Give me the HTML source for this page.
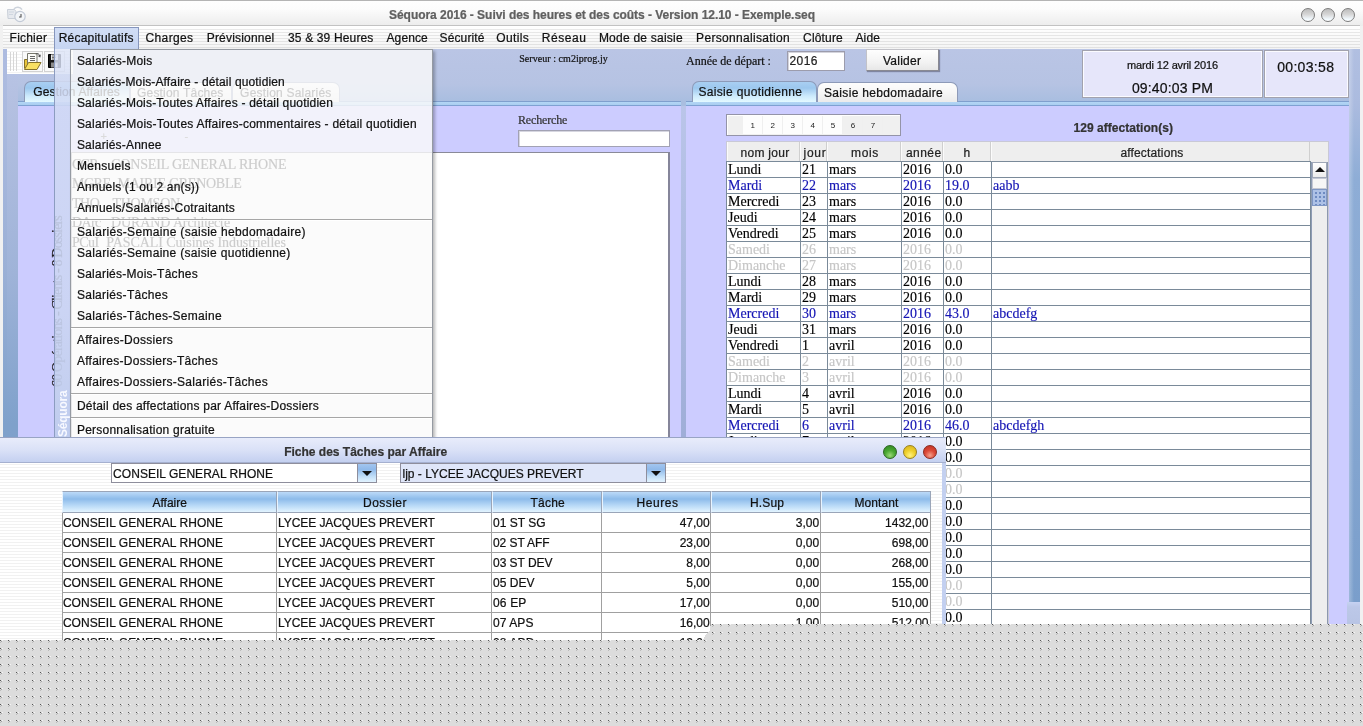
<!DOCTYPE html><html lang="fr"><head><meta charset="utf-8"><title>Séquora 2016</title><style>

*{box-sizing:border-box;margin:0;padding:0}
html,body{width:1363px;height:726px;overflow:hidden;background:#f1f1f1}
body{position:relative;font-family:"Liberation Sans",sans-serif;font-size:12px;color:#111}
#root{position:absolute;left:0;top:0;width:1363px;height:726px;will-change:transform}
.abs{position:absolute}
.t{position:absolute;white-space:nowrap;-webkit-text-stroke:0.22px currentColor}
#titlebar{left:0;top:0;width:1363px;height:26px;background:linear-gradient(#fefefe 0,#fcfcfc 8px,#ececec 25px);border-top:1px solid #b4b4b4}
.wc{position:absolute;top:8px;width:14px;height:14px;border-radius:50%;border:1.3px solid #7c7c7c;background:linear-gradient(#bcbcbc 0,#d6d6d6 45%,#f2faff 85%,#fff 100%)}
#menubar{left:3px;top:25px;width:1357px;height:24px;border-top:1px solid #c2c2c2;background:linear-gradient(rgba(0,0,0,0) 0,rgba(0,0,0,.045) 100%),repeating-linear-gradient(#fff 0,#fff 2px,#eaeaea 2px,#eaeaea 3px);background-position:0 0,0 1px}
#desk{left:3px;top:49px;width:1357px;height:600px;background:linear-gradient(#bac5e5 0,#b6c3e3 35px,#a9bee0 52px,#a6b8dc 120px,#8aa7cf 400px,#86a4cd 600px)}
#deskedgeL{left:3px;top:49px;width:4px;height:600px;background:linear-gradient(#aebce0 0,#abbadf 60px,#9bb0d6 220px,#7fa1cb 375px,#7c9fca 600px)}
#deskL{left:7px;top:74px;width:11px;height:570px;background:linear-gradient(#b7c3e4 0,#b4c0e1 30px,#9fb3d8 200px,#7fa1cb 350px,#7c9fca 570px)}
#toolbar{left:7px;top:49px;width:66px;height:25px;background:repeating-linear-gradient(#fff 0,#fff 2px,#f3f3f3 2px,#f3f3f3 3px)}
.tbtn{position:absolute;top:2px;width:21px;height:21px;border:1px solid #d2d2d2;background:#fafafa}
.panel{position:absolute;background:#ccccff}
.ptop{position:absolute;height:5px;background:linear-gradient(#7f9fcd 0,#7f9fcd 1px,#b3d6f5 1px,#a9cdf0 4px,#7fa1d2 4px)}
.tab{position:absolute;border:1px solid #8d9ab8;border-bottom:none;border-radius:7px 7px 0 0}
.tabsel{background:linear-gradient(#a9cff2 0,#9cc7ee 30%,#cdeafc 70%,#e4f9ff 100%)}
.tabun{background:linear-gradient(#fdfdfd 0,#f6f6f6 50%,#ebebeb 100%)}
.box{position:absolute;background:#e6e6fa;border:1px solid #a2a2ae;box-shadow:inset 0 0 0 1px #fbfbff}
#grid{position:absolute;left:727px;top:162px;width:584px;border-top:0}
.r{position:absolute;left:0;width:584px;height:16px;border-bottom:1px solid #7a8a99;background:#fff;font-family:"Liberation Serif",serif;font-size:14px;line-height:15px;color:#000;-webkit-text-stroke:0.15px currentColor}
.r span{position:absolute;top:0;white-space:nowrap}
.r.b{color:#1414b4}
.r.g{color:#c6c6c6}
.vl{position:absolute;top:-1px;width:1px;background:#7a8a99}
.hd{position:absolute;top:142px;height:20px;border-left:1px solid #fbfbfb;border-right:1px solid #cfcfcf}
#popup{left:70px;top:49px;width:363px;height:392px;background:rgba(250,250,250,0.815);border:1px solid #959aa2;border-bottom:none;box-shadow:2px 2px 3px rgba(0,0,0,0.28)}
.sep{position:absolute;left:71px;width:361px;height:2px;border-top:1px solid #a6a6a6;background:rgba(255,255,255,.9)}
#iw{left:0;top:437px;width:946px;height:204px;background:repeating-linear-gradient(#fff 0,#fff 2px,#f1f1f1 2px,#f1f1f1 3px);border-right:4px solid #c3d0f0;border-top:1px solid #98a4c4}
#iwt{left:0;top:0;width:946px;height:25px;background:linear-gradient(#e8ecfb 0,#dae1f7 50%,#c4d0f0 100%);border-bottom:1px solid #a5b0cf}
.circ{position:absolute;top:445px;width:14px;height:14px;border-radius:50%}
.combo{position:absolute;top:463px;height:20px;border:1px solid #8e8e9c}
.cbtn{position:absolute;right:0;top:0;width:19px;height:18px;border-left:1px solid #8e8e9c;background:linear-gradient(#a3c5ef 0,#8fb9ea 30%,#c2dff8 70%,#e2f3ff 100%)}
.cbtn:after{content:"";position:absolute;left:4px;top:7px;border:5px solid transparent;border-top:5px solid #111;border-bottom:none}
.h2{position:absolute;top:491px;height:22px;border:1px solid #9aa5b8;border-left-color:#e8f4ff;background:linear-gradient(#bcdaf8 0,#8dbbea 35%,#b5d7f6 65%,#e2f4ff 100%)}
.c2{position:absolute;height:20px;background:#fff;border-right:1px solid #a0a0a0;border-bottom:1px solid #a0a0a0}

</style></head><body><div id="root">
<div class="abs" id="titlebar"></div>
<svg class="abs" style="left:6px;top:6px" width="22" height="19" viewBox="0 0 22 19"><path d="M1.5 3.5h7l1.5 2v7h-8z" fill="#e6e9ee" stroke="#c9cfd8" stroke-width="1"/><path d="M3 6h5M3 8.5h4" stroke="#cfd6e0" stroke-width="1"/><path d="M8 3c2-2.4 6-2.4 8 .6" fill="none" stroke="#cdd3dc" stroke-width="1.6"/><circle cx="14" cy="10.5" r="5.2" fill="#f3f5f8" stroke="#c3cad6" stroke-width="1.2"/><path d="M15 8v3h-2" fill="none" stroke="#555" stroke-width="1.1"/></svg>
<div class="t" style="left:389.0px;top:8.5px;font-size:12px;line-height:12px;font-weight:bold;color:#606060;letter-spacing:-0.039px;">Séquora 2016 - Suivi des heures et des coûts - Version 12.10 - Exemple.seq</div>
<div class="wc" style="left:1301px"></div>
<div class="wc" style="left:1321px"></div>
<div class="wc" style="left:1341px"></div>
<div class="abs" id="menubar"></div>
<div class="abs" id="desk"></div>
<div class="abs" id="deskedgeL"></div><div class="abs" id="deskL"></div>
<div class="abs" id="toolbar"><div class="abs" style="left:3px;top:3px;width:1px;height:19px;background:#d6d6d6"></div><div class="abs" style="left:6px;top:3px;width:1px;height:19px;background:#d6d6d6"></div><div class="abs" style="left:9px;top:3px;width:1px;height:19px;background:#d6d6d6"></div><div class="tbtn" style="left:15px"><svg width="19" height="19" viewBox="0 0 19 19" style="position:absolute;left:0;top:0"><path d="M1.5 16.5V7.5h3.5l1 1.5h3v3" fill="#e9c53a" stroke="#86722a" stroke-width="1"/><path d="M4.5 1.5h9.5v11.5h-9.5z" fill="#fcfcf8" stroke="#77776c" stroke-width="1"/><path d="M6.5 4.5h5.5M6.5 6.5h5.5M6.5 8.5h5.5" stroke="#666" stroke-width="1" shape-rendering="crispEdges"/><path d="M12.8 2.2c1.6-1.2 3.4-.6 3.8 1.6" fill="none" stroke="#555" stroke-width="1"/><path d="M17.8 2.4l-.5 3-2.5-1.5z" fill="#444"/><path d="M1.5 17.5l4-7h12.5l-4 7z" fill="#f8e064" stroke="#86722a" stroke-width="1"/></svg></div><div class="tbtn" style="left:37px"><svg width="19" height="19" viewBox="0 0 19 19" style="position:absolute;left:0;top:0"><path d="M3.5 2.5h12v13h-12z" fill="#1a1a1a" stroke="#000" stroke-width="1"/><path d="M6 2.5h7v5.5H6z" fill="#ececec"/><path d="M7 4h4M7 5.5h4M7 7h3" stroke="#555" stroke-width=".8"/><path d="M6 10.5h7v5H6z" fill="#8c8c8c"/><path d="M10.5 11.5h1.5v3.5h-1.5z" fill="#e0e0e0"/></svg></div></div>
<div class="t" style="left:519.2px;top:54.0px;font-size:10px;line-height:10px;font-family:'Liberation Serif',serif;color:#111;letter-spacing:0.053px;">Serveur : cm2iprog.jy</div>
<div class="panel" style="left:18px;top:101px;width:663px;height:340px"></div>
<div class="ptop" style="left:18px;top:101px;width:663px"></div>
<div class="tab tabsel" style="left:24px;top:81px;width:106px;height:21px"></div>
<div class="tab tabun" style="left:130px;top:82px;width:102px;height:20px"></div>
<div class="tab tabun" style="left:232px;top:82px;width:108px;height:20px"></div>
<div class="t" style="left:33.3px;top:86.0px;font-size:12px;line-height:12px;color:#111;letter-spacing:0.138px;">Gestion Affaires</div>
<div class="t" style="left:137.0px;top:86.5px;font-size:12px;line-height:12px;color:#111;letter-spacing:0.191px;">Gestion Tâches</div>
<div class="t" style="left:240.1px;top:86.5px;font-size:12px;line-height:12px;color:#111;letter-spacing:0.21px;">Gestion Salariés</div>
<div class="t" style="left:518.0px;top:114.0px;font-size:12px;line-height:12px;font-family:'Liberation Serif',serif;color:#333;letter-spacing:-0.149px;">Recherche</div>
<div class="abs" style="left:518px;top:130px;width:152px;height:17px;background:#fff;border:1px solid #a2a2b4;box-shadow:inset 1px 1px 0 #d6d6e0"></div>
<div class="abs" style="left:71px;top:152px;width:599px;height:290px;background:#fff;border-top:1px solid #8a8a98;border-right:2px solid #85859a;border-left:1px solid #8a8a98"></div>
<div class="t" style="left:100.5px;top:131.0px;font-size:11px;line-height:11px;color:#555;letter-spacing:0.562px;">+</div>
<div class="t" style="left:184.5px;top:131.0px;font-size:11px;line-height:11px;color:#555;letter-spacing:0.328px;">-</div>
<div class="t" style="left:50px;top:387px;font-size:14px;line-height:15px;font-family:'Liberation Serif',serif;color:#222;transform-origin:0 0;transform:rotate(-90deg);letter-spacing:-0.824px">60 Opérations - Clients - 8 Dossiers</div>
<div class="t" style="left:72.0px;top:157.5px;font-size:14px;line-height:14px;font-family:'Liberation Serif',serif;color:#000;letter-spacing:-1.099px;">CGR</div>
<div class="t" style="left:111.1px;top:157.5px;font-size:14px;line-height:14px;font-family:'Liberation Serif',serif;color:#000;letter-spacing:-0.163px;">CONSEIL GENERAL RHONE</div>
<div class="t" style="left:72.0px;top:177.0px;font-size:14px;line-height:14px;font-family:'Liberation Serif',serif;color:#000;letter-spacing:-0.488px;">MGRE</div>
<div class="t" style="left:117.5px;top:177.0px;font-size:14px;line-height:14px;font-family:'Liberation Serif',serif;color:#000;letter-spacing:-0.263px;">MAIRIE GRENOBLE</div>
<div class="t" style="left:72.0px;top:196.5px;font-size:14px;line-height:14px;font-family:'Liberation Serif',serif;color:#000;letter-spacing:-0.427px;">THO</div>
<div class="t" style="left:112.5px;top:196.5px;font-size:14px;line-height:14px;font-family:'Liberation Serif',serif;color:#000;letter-spacing:-0.276px;">THOMSON</div>
<div class="t" style="left:72.0px;top:216.0px;font-size:14px;line-height:14px;font-family:'Liberation Serif',serif;color:#000;letter-spacing:-0.652px;">DArc</div>
<div class="t" style="left:111.1px;top:216.0px;font-size:14px;line-height:14px;font-family:'Liberation Serif',serif;color:#000;letter-spacing:-0.119px;">DURAND Architecte</div>
<div class="t" style="left:72.0px;top:235.5px;font-size:14px;line-height:14px;font-family:'Liberation Serif',serif;color:#000;letter-spacing:-0.574px;">PCuI</div>
<div class="t" style="left:106.3px;top:235.5px;font-size:14px;line-height:14px;font-family:'Liberation Serif',serif;color:#000;letter-spacing:-0.067px;">PASCALI Cuisines Industrielles</div>
<div class="abs" style="left:681px;top:106px;width:5px;height:340px;background:linear-gradient(#bac5e9,#9eadd7)"></div>
<div class="panel" style="left:686px;top:101px;width:663px;height:540px"></div>
<div class="ptop" style="left:686px;top:101px;width:663px"></div>
<div class="tab tabsel" style="left:692px;top:81px;width:125px;height:21px"></div>
<div class="tab tabun" style="left:817px;top:82px;width:141px;height:20px"></div>
<div class="t" style="left:698.5px;top:85.5px;font-size:12px;line-height:12px;color:#111;letter-spacing:0.312px;">Saisie quotidienne</div>
<div class="t" style="left:824.0px;top:86.5px;font-size:12px;line-height:12px;color:#111;letter-spacing:0.329px;">Saisie hebdomadaire</div>
<div class="t" style="left:686.0px;top:55.0px;font-size:12px;line-height:12px;font-family:'Liberation Serif',serif;color:#111;letter-spacing:-0.004px;">Année de départ :</div>
<div class="abs" style="left:787px;top:51px;width:58px;height:20px;background:#fff;border:1px solid #9c9cac;box-shadow:inset 1px 1px 0 #d4d4dc"></div>
<div class="t" style="left:789.5px;top:55.0px;font-size:12px;line-height:12px;color:#222;letter-spacing:0.449px;">2016</div>
<div class="abs" style="left:866px;top:49px;width:73px;height:22px;background:linear-gradient(#fefefe,#f3f3f3 60%,#e7e7e7);border:1px solid #c2c2c8;border-right-color:#8a8a92;border-bottom-color:#8a8a92;box-shadow:1px 1px 1px rgba(60,60,80,.45)"></div>
<div class="t" style="left:882.9px;top:55.0px;font-size:12px;line-height:12px;color:#111;letter-spacing:0.276px;">Valider</div>
<div class="box" style="left:1082px;top:50px;width:181px;height:48px"></div>
<div class="t" style="left:1126.9px;top:60.0px;font-size:11px;line-height:11px;color:#111;letter-spacing:-0.124px;">mardi 12 avril 2016</div>
<div class="t" style="left:1131.9px;top:80.5px;font-size:14px;line-height:14px;color:#111;letter-spacing:0.164px;">09:40:03 PM</div>
<div class="box" style="left:1264px;top:50px;width:85px;height:48px"></div>
<div class="t" style="left:1277.2px;top:60.0px;font-size:14px;line-height:14px;color:#111;letter-spacing:0.325px;">00:03:58</div>
<div class="abs" style="left:726px;top:114px;width:175px;height:22px;background:#f0f0f0;border:1px solid #9494a8;box-shadow:inset 1px 1px 0 #fff"></div>
<div class="abs" style="left:743px;top:116px;width:100px;height:18px;background:#fdfdfd"></div>
<div class="t" style="left:750.5px;top:121.5px;font-size:8px;line-height:8px;color:#222;letter-spacing:0.147px;-webkit-text-stroke:0">1</div>
<div class="t" style="left:770.5px;top:121.5px;font-size:8px;line-height:8px;color:#222;letter-spacing:0.147px;-webkit-text-stroke:0">2</div>
<div class="t" style="left:790.6px;top:121.5px;font-size:8px;line-height:8px;color:#222;letter-spacing:0.147px;-webkit-text-stroke:0">3</div>
<div class="t" style="left:810.6px;top:121.5px;font-size:8px;line-height:8px;color:#222;letter-spacing:0.147px;-webkit-text-stroke:0">4</div>
<div class="t" style="left:830.7px;top:121.5px;font-size:8px;line-height:8px;color:#222;letter-spacing:0.147px;-webkit-text-stroke:0">5</div>
<div class="t" style="left:850.8px;top:121.5px;font-size:8px;line-height:8px;color:#222;letter-spacing:0.147px;-webkit-text-stroke:0">6</div>
<div class="t" style="left:870.8px;top:121.5px;font-size:8px;line-height:8px;color:#222;letter-spacing:0.147px;-webkit-text-stroke:0">7</div>
<div class="abs" style="left:762px;top:116px;width:1px;height:18px;background:#efefef"></div>
<div class="abs" style="left:782px;top:116px;width:1px;height:18px;background:#efefef"></div>
<div class="abs" style="left:802px;top:116px;width:1px;height:18px;background:#efefef"></div>
<div class="abs" style="left:822px;top:116px;width:1px;height:18px;background:#efefef"></div>
<div class="abs" style="left:842px;top:116px;width:1px;height:18px;background:#efefef"></div>
<div class="abs" style="left:862px;top:116px;width:1px;height:18px;background:#efefef"></div>
<div class="abs" style="left:882px;top:116px;width:1px;height:18px;background:#efefef"></div>
<div class="t" style="left:1073.5px;top:121.5px;font-size:12px;line-height:12px;font-weight:bold;color:#333;letter-spacing:0.044px;">129 affectation(s)</div>
<div class="abs" style="left:726px;top:141px;width:603px;height:500px;background:#eeeeee;border:1px solid #c9c9d6"></div>
<div class="hd" style="left:727px;width:73px"></div>
<div class="t" style="left:740.5px;top:147.0px;font-size:12px;line-height:12px;color:#222;letter-spacing:0.289px;">nom jour</div>
<div class="hd" style="left:800px;width:27px"></div>
<div class="t" style="left:803.5px;top:147.0px;font-size:12px;line-height:12px;color:#222;letter-spacing:0.746px;">jour</div>
<div class="hd" style="left:827px;width:74px"></div>
<div class="t" style="left:851.0px;top:147.0px;font-size:12px;line-height:12px;color:#222;letter-spacing:0.664px;">mois</div>
<div class="hd" style="left:901px;width:42px"></div>
<div class="t" style="left:906.0px;top:147.0px;font-size:12px;line-height:12px;color:#222;letter-spacing:0.425px;">année</div>
<div class="hd" style="left:943px;width:48px"></div>
<div class="t" style="left:963.5px;top:147.0px;font-size:12px;line-height:12px;color:#222;letter-spacing:-0.188px;">h</div>
<div class="hd" style="left:991px;width:319px"></div>
<div class="t" style="left:1120.4px;top:147.0px;font-size:12px;line-height:12px;color:#222;letter-spacing:0.162px;">affectations</div>
<div id="grid"><div class="abs" style="left:0;top:-1px;width:584px;height:1px;background:#7a8a99"></div>
<div class="r" style="top:0px"><span style="left:1px">Lundi</span><span style="left:75px">21</span><span style="left:102px">mars</span><span style="left:176px">2016</span><span style="left:218px">0.0</span><span style="left:266px"></span></div>
<div class="r b" style="top:16px"><span style="left:1px">Mardi</span><span style="left:75px">22</span><span style="left:102px">mars</span><span style="left:176px">2016</span><span style="left:218px">19.0</span><span style="left:266px">aabb</span></div>
<div class="r" style="top:32px"><span style="left:1px">Mercredi</span><span style="left:75px">23</span><span style="left:102px">mars</span><span style="left:176px">2016</span><span style="left:218px">0.0</span><span style="left:266px"></span></div>
<div class="r" style="top:48px"><span style="left:1px">Jeudi</span><span style="left:75px">24</span><span style="left:102px">mars</span><span style="left:176px">2016</span><span style="left:218px">0.0</span><span style="left:266px"></span></div>
<div class="r" style="top:64px"><span style="left:1px">Vendredi</span><span style="left:75px">25</span><span style="left:102px">mars</span><span style="left:176px">2016</span><span style="left:218px">0.0</span><span style="left:266px"></span></div>
<div class="r g" style="top:80px"><span style="left:1px">Samedi</span><span style="left:75px">26</span><span style="left:102px">mars</span><span style="left:176px">2016</span><span style="left:218px">0.0</span><span style="left:266px"></span></div>
<div class="r g" style="top:96px"><span style="left:1px">Dimanche</span><span style="left:75px">27</span><span style="left:102px">mars</span><span style="left:176px">2016</span><span style="left:218px">0.0</span><span style="left:266px"></span></div>
<div class="r" style="top:112px"><span style="left:1px">Lundi</span><span style="left:75px">28</span><span style="left:102px">mars</span><span style="left:176px">2016</span><span style="left:218px">0.0</span><span style="left:266px"></span></div>
<div class="r" style="top:128px"><span style="left:1px">Mardi</span><span style="left:75px">29</span><span style="left:102px">mars</span><span style="left:176px">2016</span><span style="left:218px">0.0</span><span style="left:266px"></span></div>
<div class="r b" style="top:144px"><span style="left:1px">Mercredi</span><span style="left:75px">30</span><span style="left:102px">mars</span><span style="left:176px">2016</span><span style="left:218px">43.0</span><span style="left:266px">abcdefg</span></div>
<div class="r" style="top:160px"><span style="left:1px">Jeudi</span><span style="left:75px">31</span><span style="left:102px">mars</span><span style="left:176px">2016</span><span style="left:218px">0.0</span><span style="left:266px"></span></div>
<div class="r" style="top:176px"><span style="left:1px">Vendredi</span><span style="left:75px">1</span><span style="left:102px">avril</span><span style="left:176px">2016</span><span style="left:218px">0.0</span><span style="left:266px"></span></div>
<div class="r g" style="top:192px"><span style="left:1px">Samedi</span><span style="left:75px">2</span><span style="left:102px">avril</span><span style="left:176px">2016</span><span style="left:218px">0.0</span><span style="left:266px"></span></div>
<div class="r g" style="top:208px"><span style="left:1px">Dimanche</span><span style="left:75px">3</span><span style="left:102px">avril</span><span style="left:176px">2016</span><span style="left:218px">0.0</span><span style="left:266px"></span></div>
<div class="r" style="top:224px"><span style="left:1px">Lundi</span><span style="left:75px">4</span><span style="left:102px">avril</span><span style="left:176px">2016</span><span style="left:218px">0.0</span><span style="left:266px"></span></div>
<div class="r" style="top:240px"><span style="left:1px">Mardi</span><span style="left:75px">5</span><span style="left:102px">avril</span><span style="left:176px">2016</span><span style="left:218px">0.0</span><span style="left:266px"></span></div>
<div class="r b" style="top:256px"><span style="left:1px">Mercredi</span><span style="left:75px">6</span><span style="left:102px">avril</span><span style="left:176px">2016</span><span style="left:218px">46.0</span><span style="left:266px">abcdefgh</span></div>
<div class="r" style="top:272px"><span style="left:1px">Jeudi</span><span style="left:75px">7</span><span style="left:102px">avril</span><span style="left:176px">2016</span><span style="left:218px">0.0</span><span style="left:266px"></span></div>
<div class="r" style="top:288px"><span style="left:1px">Vendredi</span><span style="left:75px">8</span><span style="left:102px">avril</span><span style="left:176px">2016</span><span style="left:218px">0.0</span><span style="left:266px"></span></div>
<div class="r g" style="top:304px"><span style="left:1px">Samedi</span><span style="left:75px">9</span><span style="left:102px">avril</span><span style="left:176px">2016</span><span style="left:218px">0.0</span><span style="left:266px"></span></div>
<div class="r g" style="top:320px"><span style="left:1px">Dimanche</span><span style="left:75px">10</span><span style="left:102px">avril</span><span style="left:176px">2016</span><span style="left:218px">0.0</span><span style="left:266px"></span></div>
<div class="r" style="top:336px"><span style="left:1px">Lundi</span><span style="left:75px">11</span><span style="left:102px">avril</span><span style="left:176px">2016</span><span style="left:218px">0.0</span><span style="left:266px"></span></div>
<div class="r" style="top:352px"><span style="left:1px">Mardi</span><span style="left:75px">12</span><span style="left:102px">avril</span><span style="left:176px">2016</span><span style="left:218px">0.0</span><span style="left:266px"></span></div>
<div class="r" style="top:368px"><span style="left:1px">Mercredi</span><span style="left:75px">13</span><span style="left:102px">avril</span><span style="left:176px">2016</span><span style="left:218px">0.0</span><span style="left:266px"></span></div>
<div class="r" style="top:384px"><span style="left:1px">Jeudi</span><span style="left:75px">14</span><span style="left:102px">avril</span><span style="left:176px">2016</span><span style="left:218px">0.0</span><span style="left:266px"></span></div>
<div class="r" style="top:400px"><span style="left:1px">Vendredi</span><span style="left:75px">15</span><span style="left:102px">avril</span><span style="left:176px">2016</span><span style="left:218px">0.0</span><span style="left:266px"></span></div>
<div class="r g" style="top:416px"><span style="left:1px">Samedi</span><span style="left:75px">16</span><span style="left:102px">avril</span><span style="left:176px">2016</span><span style="left:218px">0.0</span><span style="left:266px"></span></div>
<div class="r g" style="top:432px"><span style="left:1px">Dimanche</span><span style="left:75px">17</span><span style="left:102px">avril</span><span style="left:176px">2016</span><span style="left:218px">0.0</span><span style="left:266px"></span></div>
<div class="r" style="top:448px"><span style="left:1px">Lundi</span><span style="left:75px">18</span><span style="left:102px">avril</span><span style="left:176px">2016</span><span style="left:218px">0.0</span><span style="left:266px"></span></div>
<div class="r" style="top:464px"><span style="left:1px">Mardi</span><span style="left:75px">19</span><span style="left:102px">avril</span><span style="left:176px">2016</span><span style="left:218px">0.0</span><span style="left:266px"></span></div>
<div class="vl" style="left:73px;height:480px"></div>
<div class="vl" style="left:100px;height:480px"></div>
<div class="vl" style="left:174px;height:480px"></div>
<div class="vl" style="left:216px;height:480px"></div>
<div class="vl" style="left:264px;height:480px"></div>
<div class="vl" style="left:-1px;height:480px"></div>
<div class="vl" style="left:583px;height:480px"></div>
</div>
<div class="abs" style="left:1311px;top:162px;width:17px;height:480px;background:#eeeeee;border-left:1px solid #8e9cb4;border-right:1px solid #8c98ae"></div>
<div class="abs" style="left:1312px;top:162px;width:15px;height:16px;background:linear-gradient(#fff,#ececec);border:1px solid #a0a8b8"></div>
<div class="abs" style="left:1315px;top:167px;width:0;height:0;border:5px solid transparent;border-bottom:5px solid #111;border-top:none"></div>
<div class="abs" style="left:1312px;top:178px;width:15px;height:11px;background:#f6f6f6;border:1px solid #c4c8d4"></div>
<div class="abs" style="left:1312px;top:189px;width:15px;height:17px;border:1px solid #7f97c4;background-color:#adc1e6;background-image:radial-gradient(circle,#6e8bc2 0.9px,rgba(110,139,194,0) 1.3px);background-size:4px 4px;background-position:1px 1px"></div>
<div class="abs" style="left:1349px;top:49px;width:11px;height:600px;background:linear-gradient(90deg,rgba(255,255,255,.28) 0,rgba(255,255,255,0) 45%),linear-gradient(#b1bfe1 0,#abbbdf 55px,#8eadd6 130px,#86a7d1 350px,#7a9ecb 553px)"></div>
<div class="abs" style="left:1347px;top:602px;width:13px;height:24px;background:linear-gradient(#c6d2f2 0,#bcc8e8 5px,#b8c4e4 100%)"></div>
<div class="abs" style="left:54px;top:27px;width:85px;height:22px;background:linear-gradient(#d2def6,#c6d5f2);border:1px solid #8696bd;border-bottom:none"></div>
<div class="abs" style="left:54px;top:49px;width:17px;height:392px;border-left:1px solid #8c9cc0;background:linear-gradient(rgba(222,229,247,.82) 0,rgba(208,217,244,.88) 60px,rgba(203,213,243,.90) 260px,rgba(196,208,239,.94) 340px,rgba(190,204,237,.96) 392px)"></div>
<div class="t" style="left:56.5px;top:437px;font-size:12px;font-weight:bold;color:#f8f9ff;transform-origin:0 0;transform:rotate(-90deg);letter-spacing:-0.217px;line-height:13px;-webkit-text-stroke:0">Séquora</div>
<div class="abs" id="popup"></div>
<div class="t" style="left:76.9px;top:54.5px;font-size:12px;line-height:12px;color:#111;letter-spacing:0.224px;">Salariés-Mois</div>
<div class="t" style="left:76.9px;top:75.5px;font-size:12px;line-height:12px;color:#111;letter-spacing:0.136px;">Salariés-Mois-Affaire - détail quotidien</div>
<div class="t" style="left:76.9px;top:96.5px;font-size:12px;line-height:12px;color:#111;letter-spacing:0.2px;">Salariés-Mois-Toutes Affaires - détail quotidien</div>
<div class="t" style="left:76.9px;top:117.5px;font-size:12px;line-height:12px;color:#111;letter-spacing:0.229px;">Salariés-Mois-Toutes Affaires-commentaires - détail quotidien</div>
<div class="t" style="left:76.9px;top:138.5px;font-size:12px;line-height:12px;color:#111;letter-spacing:0.196px;">Salariés-Annee</div>
<div class="t" style="left:76.9px;top:159.5px;font-size:12px;line-height:12px;color:#111;letter-spacing:0.318px;">Mensuels</div>
<div class="t" style="left:76.9px;top:180.5px;font-size:12px;line-height:12px;color:#111;letter-spacing:0.158px;">Annuels (1 ou 2 an(s))</div>
<div class="t" style="left:76.9px;top:201.5px;font-size:12px;line-height:12px;color:#111;letter-spacing:0.215px;">Annuels/Salariés-Cotraitants</div>
<div class="t" style="left:76.9px;top:225.5px;font-size:12px;line-height:12px;color:#111;letter-spacing:0.319px;">Salariés-Semaine (saisie hebdomadaire)</div>
<div class="t" style="left:76.9px;top:246.5px;font-size:12px;line-height:12px;color:#111;letter-spacing:0.311px;">Salariés-Semaine (saisie quotidienne)</div>
<div class="t" style="left:76.9px;top:267.5px;font-size:12px;line-height:12px;color:#111;letter-spacing:0.253px;">Salariés-Mois-Tâches</div>
<div class="t" style="left:76.9px;top:288.5px;font-size:12px;line-height:12px;color:#111;letter-spacing:0.293px;">Salariés-Tâches</div>
<div class="t" style="left:76.9px;top:309.5px;font-size:12px;line-height:12px;color:#111;letter-spacing:0.306px;">Salariés-Tâches-Semaine</div>
<div class="t" style="left:76.9px;top:333.5px;font-size:12px;line-height:12px;color:#111;letter-spacing:0.292px;">Affaires-Dossiers</div>
<div class="t" style="left:76.9px;top:354.5px;font-size:12px;line-height:12px;color:#111;letter-spacing:0.276px;">Affaires-Dossiers-Tâches</div>
<div class="t" style="left:76.9px;top:375.5px;font-size:12px;line-height:12px;color:#111;letter-spacing:0.28px;">Affaires-Dossiers-Salariés-Tâches</div>
<div class="t" style="left:76.9px;top:399.5px;font-size:12px;line-height:12px;color:#111;letter-spacing:0.217px;">Détail des affectations par Affaires-Dossiers</div>
<div class="t" style="left:76.9px;top:423.5px;font-size:12px;line-height:12px;color:#111;letter-spacing:0.24px;">Personnalisation gratuite</div>
<div class="sep" style="top:219px"></div>
<div class="sep" style="top:327px"></div>
<div class="sep" style="top:393px"></div>
<div class="sep" style="top:417px"></div>
<div class="t" style="left:9.6px;top:31.5px;font-size:12px;line-height:12px;color:#111;letter-spacing:0.212px;">Fichier</div>
<div class="t" style="left:58.7px;top:31.5px;font-size:12px;line-height:12px;color:#111;letter-spacing:0.218px;">Récapitulatifs</div>
<div class="t" style="left:145.5px;top:31.5px;font-size:12px;line-height:12px;color:#111;letter-spacing:0.377px;">Charges</div>
<div class="t" style="left:206.7px;top:31.5px;font-size:12px;line-height:12px;color:#111;letter-spacing:0.202px;">Prévisionnel</div>
<div class="t" style="left:288.0px;top:31.5px;font-size:12px;line-height:12px;color:#111;letter-spacing:0.151px;">35 &amp; 39 Heures</div>
<div class="t" style="left:386.5px;top:31.5px;font-size:12px;line-height:12px;color:#111;letter-spacing:0.099px;">Agence</div>
<div class="t" style="left:439.6px;top:31.5px;font-size:12px;line-height:12px;color:#111;letter-spacing:0.109px;">Sécurité</div>
<div class="t" style="left:496.3px;top:31.5px;font-size:12px;line-height:12px;color:#111;letter-spacing:0.335px;">Outils</div>
<div class="t" style="left:541.7px;top:31.5px;font-size:12px;line-height:12px;color:#111;letter-spacing:0.571px;">Réseau</div>
<div class="t" style="left:598.9px;top:31.5px;font-size:12px;line-height:12px;color:#111;letter-spacing:0.234px;">Mode de saisie</div>
<div class="t" style="left:696.1px;top:31.5px;font-size:12px;line-height:12px;color:#111;letter-spacing:0.317px;">Personnalisation</div>
<div class="t" style="left:803.1px;top:31.5px;font-size:12px;line-height:12px;color:#111;letter-spacing:0.159px;">Clôture</div>
<div class="t" style="left:855.5px;top:31.5px;font-size:12px;line-height:12px;color:#111;letter-spacing:0.117px;">Aide</div>
<div class="abs" id="iw"><div class="abs" id="iwt"></div></div>
<div class="t" style="left:284.2px;top:445.5px;font-size:12px;line-height:12px;font-weight:bold;color:#333;letter-spacing:-0.002px;">Fiche des Tâches par Affaire</div>
<div class="circ" style="left:883px;border:1.5px solid #2b6420;background:radial-gradient(circle at 50% 78%,#9ad877 0,#4aa832 45%,#2f8421 100%)"></div>
<div class="circ" style="left:903px;border:1.5px solid #98801c;background:radial-gradient(circle at 50% 78%,#fff27e 0,#efd02c 45%,#d6b21c 100%)"></div>
<div class="circ" style="left:923px;border:1.5px solid #8a2a1e;background:radial-gradient(circle at 50% 78%,#f5a08a 0,#dc4a38 45%,#bd3022 100%)"></div>
<div class="combo" style="left:111px;width:266px;background:#fff"><div class="cbtn"></div></div>
<div class="combo" style="left:400px;width:266px;background:#dfe6f9"><div class="cbtn"></div></div>
<div class="t" style="left:113.1px;top:467.5px;font-size:12px;line-height:12px;color:#111;letter-spacing:0.04px;">CONSEIL GENERAL RHONE</div>
<div class="t" style="left:402.5px;top:467.5px;font-size:12px;line-height:12px;color:#111;letter-spacing:0.002px;">ljp - LYCEE JACQUES PREVERT</div>
<div class="h2" style="left:62px;width:215px"></div>
<div class="t" style="left:152.5px;top:497.0px;font-size:12px;line-height:12px;color:#111;letter-spacing:-0.01px;">Affaire</div>
<div class="h2" style="left:277px;width:215px"></div>
<div class="t" style="left:363.0px;top:497.0px;font-size:12px;line-height:12px;color:#111;letter-spacing:0.473px;">Dossier</div>
<div class="h2" style="left:492px;width:110px"></div>
<div class="t" style="left:530.5px;top:497.0px;font-size:12px;line-height:12px;color:#111;letter-spacing:0.228px;">Tâche</div>
<div class="h2" style="left:602px;width:109px"></div>
<div class="t" style="left:636.5px;top:497.0px;font-size:12px;line-height:12px;color:#111;letter-spacing:0.552px;">Heures</div>
<div class="h2" style="left:711px;width:110px"></div>
<div class="t" style="left:750.0px;top:497.0px;font-size:12px;line-height:12px;color:#111;letter-spacing:0.128px;">H.Sup</div>
<div class="h2" style="left:821px;width:110px"></div>
<div class="t" style="left:854.5px;top:497.0px;font-size:12px;line-height:12px;color:#111;letter-spacing:0.092px;">Montant</div>
<div class="c2" style="left:62px;top:513px;width:215px;border-left:1px solid #a0a0a0;"></div>
<div class="c2" style="left:277px;top:513px;width:215px;"></div>
<div class="c2" style="left:492px;top:513px;width:110px;"></div>
<div class="c2" style="left:602px;top:513px;width:109px;"></div>
<div class="c2" style="left:711px;top:513px;width:110px;"></div>
<div class="c2" style="left:821px;top:513px;width:110px;"></div>
<div class="t" style="left:62.9px;top:517.0px;font-size:12px;line-height:12px;color:#111;letter-spacing:0.05px;">CONSEIL GENERAL RHONE</div>
<div class="t" style="left:278.0px;top:517.0px;font-size:12px;line-height:12px;color:#111;letter-spacing:-0.066px;">LYCEE JACQUES PREVERT</div>
<div class="t" style="left:493.0px;top:517.0px;font-size:12px;line-height:12px;color:#111;letter-spacing:0.002px;">01 ST SG</div>
<div class="t" style="left:679.7px;top:517.0px;font-size:12px;line-height:12px;color:#111;letter-spacing:0.0px;">47,00</div>
<div class="t" style="left:795.8px;top:517.0px;font-size:12px;line-height:12px;color:#111;letter-spacing:0.0px;">3,00</div>
<div class="t" style="left:885.1px;top:517.0px;font-size:12px;line-height:12px;color:#111;letter-spacing:0.0px;">1432,00</div>
<div class="c2" style="left:62px;top:533px;width:215px;border-left:1px solid #a0a0a0;"></div>
<div class="c2" style="left:277px;top:533px;width:215px;"></div>
<div class="c2" style="left:492px;top:533px;width:110px;"></div>
<div class="c2" style="left:602px;top:533px;width:109px;"></div>
<div class="c2" style="left:711px;top:533px;width:110px;"></div>
<div class="c2" style="left:821px;top:533px;width:110px;"></div>
<div class="t" style="left:62.9px;top:537.0px;font-size:12px;line-height:12px;color:#111;letter-spacing:0.05px;">CONSEIL GENERAL RHONE</div>
<div class="t" style="left:278.0px;top:537.0px;font-size:12px;line-height:12px;color:#111;letter-spacing:-0.066px;">LYCEE JACQUES PREVERT</div>
<div class="t" style="left:493.0px;top:537.0px;font-size:12px;line-height:12px;color:#111;letter-spacing:-0.071px;">02 ST AFF</div>
<div class="t" style="left:679.7px;top:537.0px;font-size:12px;line-height:12px;color:#111;letter-spacing:0.0px;">23,00</div>
<div class="t" style="left:795.8px;top:537.0px;font-size:12px;line-height:12px;color:#111;letter-spacing:0.0px;">0,00</div>
<div class="t" style="left:891.8px;top:537.0px;font-size:12px;line-height:12px;color:#111;letter-spacing:0.0px;">698,00</div>
<div class="c2" style="left:62px;top:553px;width:215px;border-left:1px solid #a0a0a0;"></div>
<div class="c2" style="left:277px;top:553px;width:215px;"></div>
<div class="c2" style="left:492px;top:553px;width:110px;"></div>
<div class="c2" style="left:602px;top:553px;width:109px;"></div>
<div class="c2" style="left:711px;top:553px;width:110px;"></div>
<div class="c2" style="left:821px;top:553px;width:110px;"></div>
<div class="t" style="left:62.9px;top:557.0px;font-size:12px;line-height:12px;color:#111;letter-spacing:0.05px;">CONSEIL GENERAL RHONE</div>
<div class="t" style="left:278.0px;top:557.0px;font-size:12px;line-height:12px;color:#111;letter-spacing:-0.066px;">LYCEE JACQUES PREVERT</div>
<div class="t" style="left:493.0px;top:557.0px;font-size:12px;line-height:12px;color:#111;letter-spacing:-0.035px;">03 ST DEV</div>
<div class="t" style="left:686.3px;top:557.0px;font-size:12px;line-height:12px;color:#111;letter-spacing:0.0px;">8,00</div>
<div class="t" style="left:795.8px;top:557.0px;font-size:12px;line-height:12px;color:#111;letter-spacing:0.0px;">0,00</div>
<div class="t" style="left:891.8px;top:557.0px;font-size:12px;line-height:12px;color:#111;letter-spacing:0.0px;">268,00</div>
<div class="c2" style="left:62px;top:573px;width:215px;border-left:1px solid #a0a0a0;"></div>
<div class="c2" style="left:277px;top:573px;width:215px;"></div>
<div class="c2" style="left:492px;top:573px;width:110px;"></div>
<div class="c2" style="left:602px;top:573px;width:109px;"></div>
<div class="c2" style="left:711px;top:573px;width:110px;"></div>
<div class="c2" style="left:821px;top:573px;width:110px;"></div>
<div class="t" style="left:62.9px;top:577.0px;font-size:12px;line-height:12px;color:#111;letter-spacing:0.05px;">CONSEIL GENERAL RHONE</div>
<div class="t" style="left:278.0px;top:577.0px;font-size:12px;line-height:12px;color:#111;letter-spacing:-0.066px;">LYCEE JACQUES PREVERT</div>
<div class="t" style="left:493.0px;top:577.0px;font-size:12px;line-height:12px;color:#111;letter-spacing:0.023px;">05 DEV</div>
<div class="t" style="left:686.3px;top:577.0px;font-size:12px;line-height:12px;color:#111;letter-spacing:0.0px;">5,00</div>
<div class="t" style="left:795.8px;top:577.0px;font-size:12px;line-height:12px;color:#111;letter-spacing:0.0px;">0,00</div>
<div class="t" style="left:891.8px;top:577.0px;font-size:12px;line-height:12px;color:#111;letter-spacing:0.0px;">155,00</div>
<div class="c2" style="left:62px;top:593px;width:215px;border-left:1px solid #a0a0a0;"></div>
<div class="c2" style="left:277px;top:593px;width:215px;"></div>
<div class="c2" style="left:492px;top:593px;width:110px;"></div>
<div class="c2" style="left:602px;top:593px;width:109px;"></div>
<div class="c2" style="left:711px;top:593px;width:110px;"></div>
<div class="c2" style="left:821px;top:593px;width:110px;"></div>
<div class="t" style="left:62.9px;top:597.0px;font-size:12px;line-height:12px;color:#111;letter-spacing:0.05px;">CONSEIL GENERAL RHONE</div>
<div class="t" style="left:278.0px;top:597.0px;font-size:12px;line-height:12px;color:#111;letter-spacing:-0.066px;">LYCEE JACQUES PREVERT</div>
<div class="t" style="left:493.0px;top:597.0px;font-size:12px;line-height:12px;color:#111;letter-spacing:0.159px;">06 EP</div>
<div class="t" style="left:679.7px;top:597.0px;font-size:12px;line-height:12px;color:#111;letter-spacing:0.0px;">17,00</div>
<div class="t" style="left:795.8px;top:597.0px;font-size:12px;line-height:12px;color:#111;letter-spacing:0.0px;">0,00</div>
<div class="t" style="left:891.8px;top:597.0px;font-size:12px;line-height:12px;color:#111;letter-spacing:0.0px;">510,00</div>
<div class="c2" style="left:62px;top:613px;width:215px;border-left:1px solid #a0a0a0;"></div>
<div class="c2" style="left:277px;top:613px;width:215px;"></div>
<div class="c2" style="left:492px;top:613px;width:110px;"></div>
<div class="c2" style="left:602px;top:613px;width:109px;"></div>
<div class="c2" style="left:711px;top:613px;width:110px;"></div>
<div class="c2" style="left:821px;top:613px;width:110px;"></div>
<div class="t" style="left:62.9px;top:617.0px;font-size:12px;line-height:12px;color:#111;letter-spacing:0.05px;">CONSEIL GENERAL RHONE</div>
<div class="t" style="left:278.0px;top:617.0px;font-size:12px;line-height:12px;color:#111;letter-spacing:-0.066px;">LYCEE JACQUES PREVERT</div>
<div class="t" style="left:493.0px;top:617.0px;font-size:12px;line-height:12px;color:#111;letter-spacing:0.078px;">07 APS</div>
<div class="t" style="left:679.7px;top:617.0px;font-size:12px;line-height:12px;color:#111;letter-spacing:0.0px;">16,00</div>
<div class="t" style="left:795.8px;top:617.0px;font-size:12px;line-height:12px;color:#111;letter-spacing:0.0px;">1,00</div>
<div class="t" style="left:891.8px;top:617.0px;font-size:12px;line-height:12px;color:#111;letter-spacing:0.0px;">512,00</div>
<div class="c2" style="left:62px;top:633px;width:215px;border-left:1px solid #a0a0a0;"></div>
<div class="c2" style="left:277px;top:633px;width:215px;"></div>
<div class="c2" style="left:492px;top:633px;width:110px;"></div>
<div class="c2" style="left:602px;top:633px;width:109px;"></div>
<div class="c2" style="left:711px;top:633px;width:110px;"></div>
<div class="c2" style="left:821px;top:633px;width:110px;"></div>
<div class="t" style="left:62.9px;top:637.0px;font-size:12px;line-height:12px;color:#111;letter-spacing:0.05px;">CONSEIL GENERAL RHONE</div>
<div class="t" style="left:278.0px;top:637.0px;font-size:12px;line-height:12px;color:#111;letter-spacing:-0.066px;">LYCEE JACQUES PREVERT</div>
<div class="t" style="left:493.0px;top:637.0px;font-size:12px;line-height:12px;color:#111;letter-spacing:0.133px;">08 APD</div>
<div class="t" style="left:679.7px;top:637.0px;font-size:12px;line-height:12px;color:#111;letter-spacing:0.0px;">12,00</div>
<div class="t" style="left:795.8px;top:637.0px;font-size:12px;line-height:12px;color:#111;letter-spacing:0.0px;">0,00</div>
<div class="t" style="left:891.8px;top:637.0px;font-size:12px;line-height:12px;color:#111;letter-spacing:0.0px;">372,00</div>
<svg class="abs" style="left:0;top:624px" width="1363" height="102" viewBox="0 0 1363 102" shape-rendering="crispEdges"><defs><pattern id="dp" x="0" y="0" width="8" height="8" patternUnits="userSpaceOnUse"><rect width="8" height="8" fill="#dcdcdc"/><rect x="0" y="0" width="1" height="1" fill="#555"/><rect x="2" y="0" width="1" height="1" fill="#f4f4f4"/><rect x="1" y="1" width="1" height="1" fill="#a4a4a4"/><rect x="0" y="2" width="1" height="1" fill="#bcbcbc"/></pattern></defs><path d="M0 16H703L705 12L709.5 7L711 0H1363V102H0Z" fill="url(#dp)"/></svg>
</div></body></html>
